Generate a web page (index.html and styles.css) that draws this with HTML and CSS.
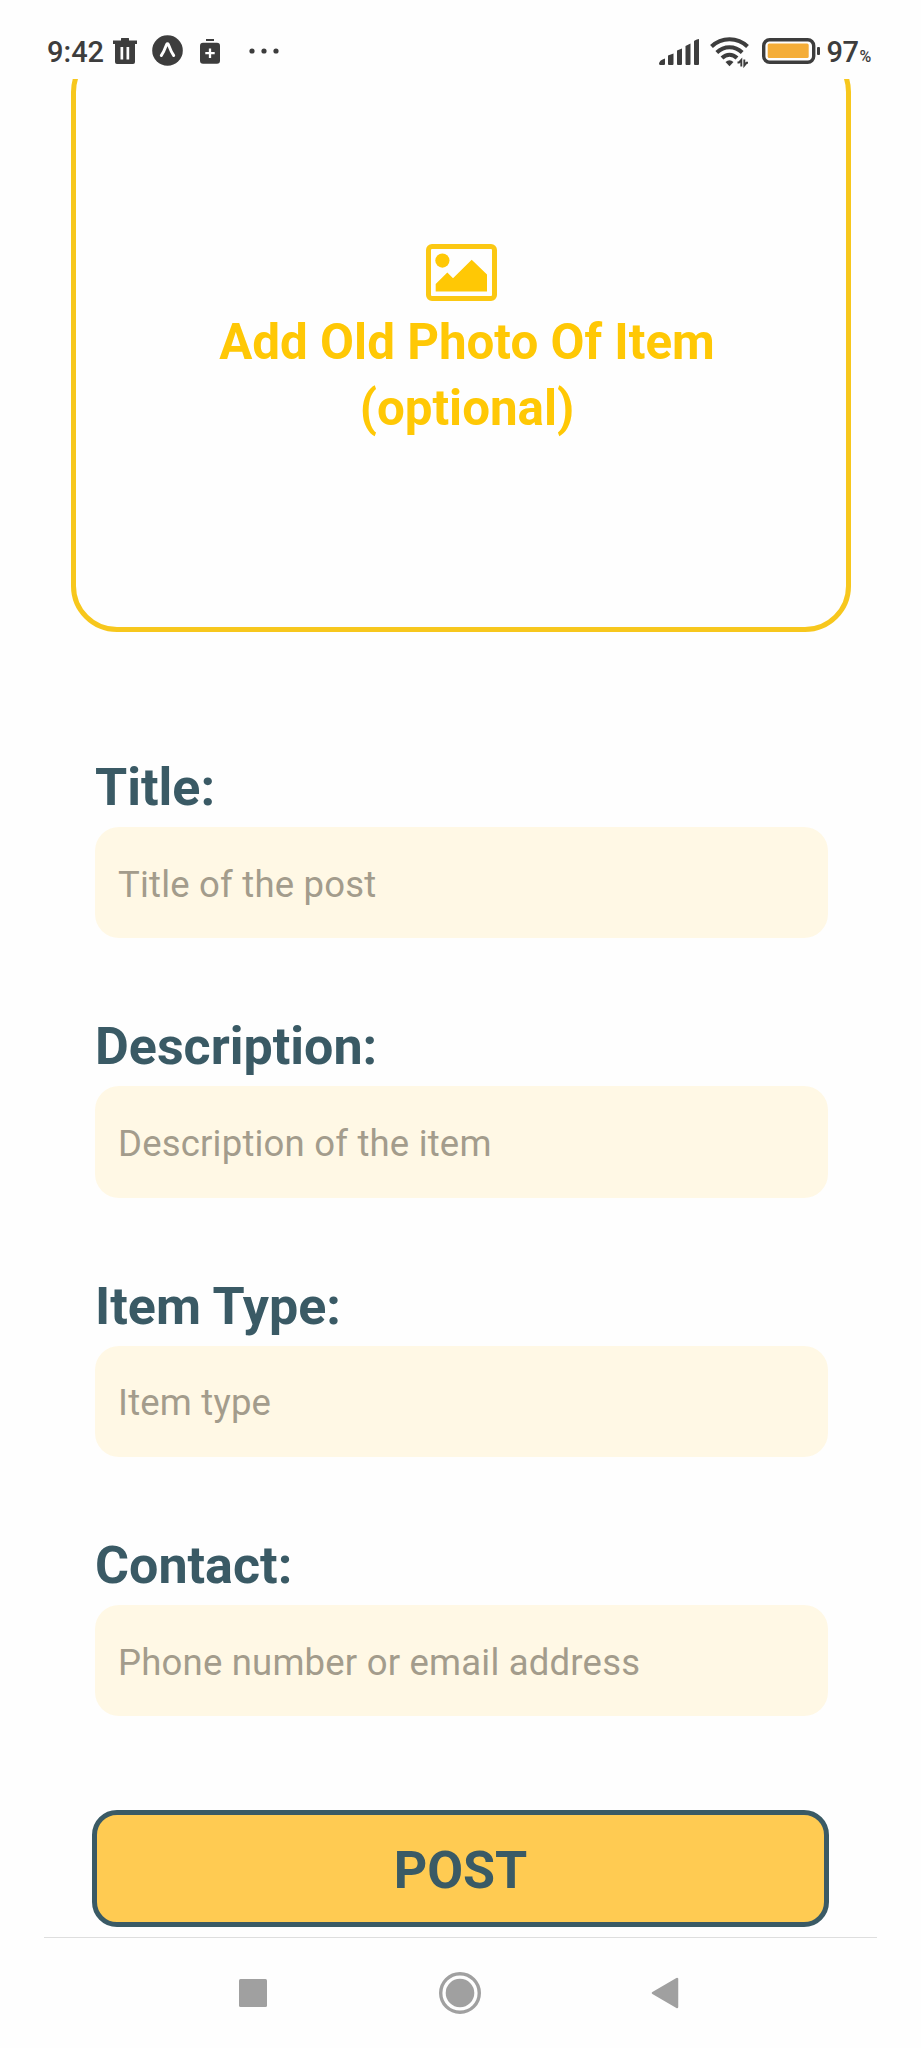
FILE: index.html
```html
<!DOCTYPE html>
<html lang="en">
<head>
<meta charset="utf-8">
<title>New post</title>
<link rel="stylesheet" href="styles.css">
</head>
<body>
<div class="screen">
  <header class="status">
    <span class="time">9:42</span>
    <svg class="i-trash" width="24" height="26" viewBox="0 0 24 26"><path fill="#3d3d3d" d="M0 2.500h8V.500q0-.500.500-.500h7q.500 0 .500.500v2h8V6h-2v18q0 2-2 2H4q-2 0-2-2V6H0zM7.500 9v12.500h2.700V9zm6 0v12.500h2.700V9z" fill-rule="evenodd"/></svg>
    <svg class="i-expo" width="31" height="31" viewBox="0 0 31 31"><circle cx="15.500" cy="15.500" r="15.300" fill="#3d3d3d"/><path d="M9.300 20.500C12 17 13.300 13 14.600 9.500q.9-1.500 1.800 0C17.700 13 19 17 21.700 20.500" fill="none" stroke="#fff" stroke-width="2.900" stroke-linecap="round"/></svg>
    <svg class="i-kit" width="20" height="25" viewBox="0 0 20 25"><path d="M6 1h8" stroke="#3d3d3d" stroke-width="2"/><rect y="3.800" width="20" height="21" rx="3" fill="#3d3d3d"/><path d="M5.300 14.200h9.400M10 9.500v9.400" stroke="#fff" stroke-width="2.300"/></svg>
    <svg class="i-dots" width="30" height="6" viewBox="0 0 30 6" fill="#3d3d3d"><circle cx="3" cy="3" r="2.600"/><circle cx="15" cy="3" r="2.600"/><circle cx="27" cy="3" r="2.600"/></svg>
    <svg class="i-signal" width="41" height="27" viewBox="0 0 41 27" fill="#3d3d3d"><path d="M0 24.500Q.5 21 6 19.500V25q0 1-1 1H1.500Q0 26 0 24.500zM9 16.500l5.500-2V25q0 1-1 1H10q-1 0-1-1zM18 11.500l5-2V25q0 1-1 1h-3q-1 0-1-1zM26.500 7l5-2.500V25q0 1-1 1h-3q-1 0-1-1zM35 2.500Q35 1 40 0V25q0 1-1 1h-3q-1 0-1-1z"/></svg>
    <svg class="i-wifi" width="40" height="31" viewBox="0 0 40 31"><g fill="none" stroke="#3d3d3d" stroke-width="4"><path d="M1.500 9.500Q9 2.200 19.500 2.200T37.500 9.500M6.800 15.500q5.500-5.300 12.700-5.300t12.700 5.300M12 21q3.300-3.300 7.500-3.300T27 21"/></g><path d="M15.500 25q4-3.700 8 0l-4 4.300z" fill="#3d3d3d"/><path d="M27.500 25.500h1.500l2.300-2.500v6.500M38 25.800h-1.500L34.300 28.500V22.500" fill="none" stroke="#3d3d3d" stroke-width="1.900"/></svg>
    <svg class="i-battery" width="58" height="26" viewBox="0 0 58 26"><rect x="1.700" y="1.700" width="50" height="22.600" rx="6" fill="none" stroke="#3d3d3d" stroke-width="3.400"/><rect x="5.700" y="5.500" width="41" height="14.500" rx="1.500" fill="#f4ad38"/><rect x="55" y="9" width="3" height="8" rx="1" fill="#3d3d3d"/></svg>
    <span class="level">97</span><span class="percent">%</span>
  </header>
  <main class="content">
    <div class="photo">
      <svg class="photo-icon" width="71" height="57" viewBox="0 0 71 57"><rect x="2.500" y="2.500" width="66" height="52" rx="3.500" fill="none" stroke="#fbc813" stroke-width="5"/><circle cx="16.400" cy="16.600" r="7.100" fill="#ffc805"/><path d="M9.700 47.500V40L21.300 28.500l5.700 5.700L45.700 15.700 61 30.500v17z" fill="#ffc805"/></svg>
      <div class="photo-text">Add Old Photo Of Item<br>(optional)</div>
    </div>
    <form class="form">
      <label class="field">Title:<input class="input" placeholder="Title of the post"></label>
      <label class="field">Description:<input class="input" placeholder="Description of the item"></label>
      <label class="field">Item Type:<input class="input" placeholder="Item type"></label>
      <label class="field">Contact:<input class="input" placeholder="Phone number or email address"></label>
      <button class="post" type="button">POST</button>
    </form>
  </main>
  <nav class="nav">
    <svg width="28" height="28" viewBox="0 0 28 28"><rect width="28" height="28" rx="1.500" fill="#a0a0a0"/></svg>
    <svg class="nav-home" width="42" height="42" viewBox="0 0 42 42"><circle cx="21" cy="21" r="19.300" fill="none" stroke="#a0a0a0" stroke-width="3.400"/><circle cx="21" cy="21" r="14.300" fill="#a0a0a0"/></svg>
    <svg width="28" height="32" viewBox="0 0 28 32"><path d="M2 16L26 2V30z" fill="#a0a0a0" stroke="#a0a0a0" stroke-width="2.500" stroke-linejoin="round"/></svg>
  </nav>
</div>
</body>
</html>
```
FILE: styles.css
```css
* { box-sizing: border-box; }
body { margin: 0; background: #fefefe; font-family: Roboto, "Liberation Sans", sans-serif; }
svg { display: block; flex: none; }
.screen { width: 921px; height: 2048px; display: flex; flex-direction: column; overflow: hidden; }

.status { height: 79px; flex: none; display: flex; align-items: flex-start; padding-left: 47px; color: #3d3d3d; line-height: 34px; font-size: 29px; font-weight: 500; }
.time { width: 65.500px; margin-top: 35px; }
.i-trash { margin-top: 38px; }
.i-expo { margin: 35px 0 0 15px; }
.i-kit { margin: 39px 0 0 17px; }
.i-dots { margin: 48px 0 0 29.500px; }
.i-signal { margin: 39px 0 0 379.500px; }
.i-wifi { margin: 37px 0 0 10px; }
.i-battery { margin: 38px 0 0 12.500px; }
.level { margin: 35px 0 0 6.500px; letter-spacing: -0.5px; }
.percent { margin: 40px 0 0 1px; font-size: 16px; }

.content { flex: 1; min-height: 0; overflow: hidden; }
.photo { width: 780px; height: 586px; margin: -33.500px 0 0 71px; padding-top: 193px; border: 5px solid #f7c71d; border-radius: 46px; display: flex; flex-direction: column; align-items: center; }
.photo-text { margin: 8px 0 0 12px; color: #ffc805; font-size: 49.300px; font-weight: 700; line-height: 66.500px; text-align: center; white-space: nowrap; }

.form { margin: 126.500px 92px 0; display: flex; flex-direction: column; }
.field { margin: 0 1px 79px 3px; display: flex; flex-direction: column; gap: 9px; color: #3a5a65; font-size: 52px; font-weight: 700; line-height: 60px; }
.input { width: 100%; height: 111.300px; padding: 3px 23px 0; border: 0; border-radius: 24px; background: #fff8e5; font: 400 36.500px Roboto, "Liberation Sans", sans-serif; letter-spacing: 0.2px; }
.input::placeholder { color: #a39c8c; opacity: 1; }
.post { width: 737px; height: 117px; margin-top: 14.800px; padding: 5px 0 0; border: 5px solid #3a5a65; border-radius: 25px; background: #ffcb52; color: #3a5a65; font: 700 52px Roboto, "Liberation Sans", sans-serif; }

.nav { height: 111px; flex: none; margin: 0 44px; padding: 0 198px 0 194.500px; border-top: 1px solid #dedede; display: flex; justify-content: space-between; align-items: center; }
.nav-home { margin-left: 3px; }
```
